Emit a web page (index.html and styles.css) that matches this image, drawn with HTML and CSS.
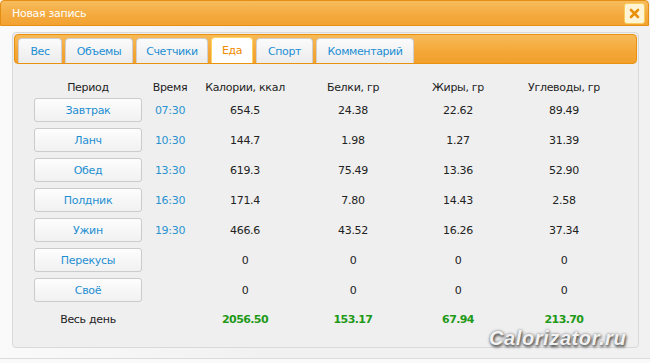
FILE: index.html
```html
<!DOCTYPE html>
<html lang="ru">
<head>
<meta charset="utf-8">
<title>Новая запись</title>
<link rel="stylesheet" href="styles.css">
</head>
<body>
<div class="dialog">
  <div class="titlebar">
    <span class="title">Новая запись</span>
    <span class="close">
      <svg width="11" height="11" viewBox="0 0 11 11"><path d="M2 2 L9 9 M9 2 L2 9" stroke="#e8900a" stroke-width="2.6" stroke-linecap="round"/></svg>
    </span>
  </div>
  <div class="panel">
    <div class="tabbar">
      <span class="tab w44">Вес</span>
      <span class="tab w68">Объемы</span>
      <span class="tab w72">Счетчики</span>
      <span class="tab w42 active">Еда</span>
      <span class="tab w57">Спорт</span>
      <span class="tab w98">Комментарий</span>
    </div>
    <div class="grid">
      <div class="head">Период</div><div class="head">Время</div><div class="head">Калории, ккал</div><div class="head">Белки, гр</div><div class="head">Жиры, гр</div><div class="head">Углеводы, гр</div>

      <div class="cell"><span class="btn">Завтрак</span></div><div class="cell time">07:30</div><div class="cell">654.5</div><div class="cell">24.38</div><div class="cell">22.62</div><div class="cell">89.49</div>
      <div class="cell"><span class="btn">Ланч</span></div><div class="cell time">10:30</div><div class="cell">144.7</div><div class="cell">1.98</div><div class="cell">1.27</div><div class="cell">31.39</div>
      <div class="cell"><span class="btn">Обед</span></div><div class="cell time">13:30</div><div class="cell">619.3</div><div class="cell">75.49</div><div class="cell">13.36</div><div class="cell">52.90</div>
      <div class="cell"><span class="btn">Полдник</span></div><div class="cell time">16:30</div><div class="cell">171.4</div><div class="cell">7.80</div><div class="cell">14.43</div><div class="cell">2.58</div>
      <div class="cell"><span class="btn">Ужин</span></div><div class="cell time">19:30</div><div class="cell">466.6</div><div class="cell">43.52</div><div class="cell">16.26</div><div class="cell">37.34</div>
      <div class="cell"><span class="btn">Перекусы</span></div><div class="cell time"></div><div class="cell">0</div><div class="cell">0</div><div class="cell">0</div><div class="cell">0</div>
      <div class="cell"><span class="btn">Своё</span></div><div class="cell time"></div><div class="cell">0</div><div class="cell">0</div><div class="cell">0</div><div class="cell">0</div>

      <div class="total label">Весь день</div><div class="total"></div><div class="total green">2056.50</div><div class="total green">153.17</div><div class="total green">67.94</div><div class="total green">213.70</div>
    </div>
  </div>
  <div class="footer"></div>
</div>
<div class="watermark">Calorizator.ru</div>
</body>
</html>
```
FILE: styles.css
```css
html, body {
  margin: 0;
  padding: 0;
}
body {
  width: 650px;
  height: 363px;
  overflow: hidden;
  background: linear-gradient(to right, #fafafa, #f1f1f1 40%, #f1f1f1);
  font-family: "DejaVu Sans", Verdana, sans-serif;
  font-size: 11px;
  color: #222;
  position: relative;
}
.dialog {
  display: flex;
  flex-direction: column;
}
.titlebar {
  height: 24px;
  margin-right: 1px;
  display: flex;
  align-items: center;
  justify-content: space-between;
  padding: 0 3px 0 11px;
  background: linear-gradient(to bottom, #f7bc5c, #f4a93d 60%, #f3a232);
  border: 1px solid #e48e14;
  border-radius: 4px 4px 0 0;
  color: #fff;
}
.title {
  font-size: 11px;
  letter-spacing: -0.3px;
}
.close {
  width: 19px;
  height: 19px;
  margin-top: 1px;
  display: flex;
  align-items: center;
  justify-content: center;
  background: #fff5d6;
  border: 1px solid #f7cf5f;
  border-radius: 3px;
}
.panel {
  margin: 6px 11px 0 12px;
  padding: 1px;
  border: 1px solid #d9d9d9;
  border-radius: 4px;
  background: #efefef;
  height: 312px;
}
.tabbar {
  height: 28px;
  display: flex;
  align-items: flex-end;
  gap: 3px;
  padding-left: 3px;
  background: linear-gradient(to bottom, #f7ba58, #f4a737 60%, #f2a02d);
  border: 1px solid #e8920f;
  border-radius: 4px;
}
.tab {
  height: 25px;
  box-sizing: border-box;
  padding: 0;
  display: flex;
  align-items: center;
  justify-content: center;
  background: linear-gradient(to bottom, #fbfbfb, #ececec);
  border: 1px solid #cfcfcf;
  border-bottom: none;
  border-radius: 4px 4px 0 0;
  color: #1d8fd3;
  letter-spacing: -0.4px;
}
.w42 { width: 42px; }
.w44 { width: 44px; }
.w57 { width: 57px; }
.w68 { width: 68px; }
.w72 { width: 72px; }
.w98 { width: 98px; }
.tab.active {
  background: #fff;
  border-color: #fbd35c;
  color: #f08a00;
  height: 26px;
}
.grid {
  margin: 15px 0 0 20px;
  display: grid;
  grid-template-columns: 108px 56px 94px 122px 88px 124px;
  grid-auto-rows: 30px;
  grid-template-rows: 16px;
  letter-spacing: -0.3px;
}
.head, .cell, .total {
  display: flex;
  align-items: center;
  justify-content: center;
}
.head {
  color: #1e1e1e;
}
.cell {
  color: #222;
}
.time {
  color: #2a93cf;
}
.btn {
  width: 108px;
  height: 24px;
  box-sizing: border-box;
  display: flex;
  align-items: center;
  justify-content: center;
  background: linear-gradient(to bottom, #fdfdfd, #f1f1f1);
  border: 1px solid #cbcbcb;
  border-radius: 3px;
  color: #1e8fd2;
}
.total {
  height: 28px;
  align-self: start;
}
.green {
  color: #1f9a18;
  font-weight: bold;
  letter-spacing: -0.6px;
}
.footer {
  margin-top: 10px;
  height: 10px;
  border-top: 1px solid #dcdcdc;
  background: #f9f9f9;
}
.watermark {
  position: absolute;
  left: 489px;
  top: 327px;
  font-family: "Liberation Sans", Arial, sans-serif;
  font-weight: bold;
  font-style: italic;
  font-size: 20px;
  color: #f2f2f2;
  letter-spacing: 0.6px;
  text-shadow: 1px 2px 3px #444, 0 0 3px #777;
}
```
